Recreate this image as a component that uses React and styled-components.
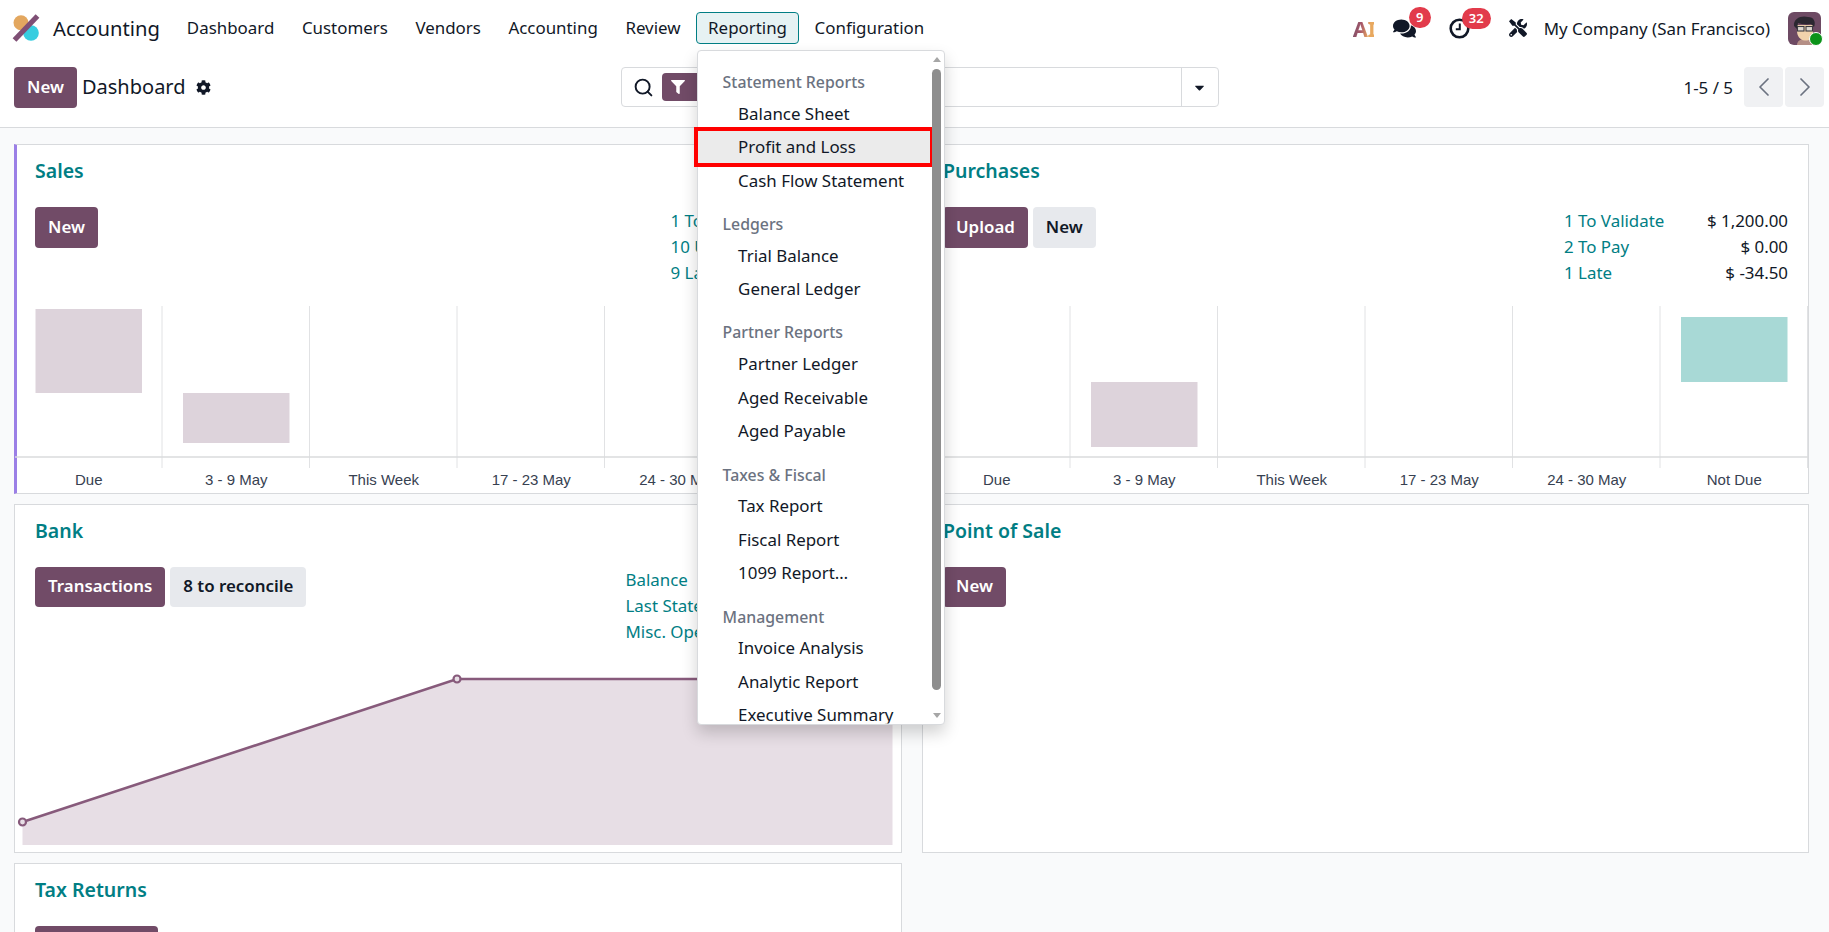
import React from "react";
import styled, { createGlobalStyle } from "styled-components";
import { FaCog, FaComments, FaFilter, FaCaretDown, FaTools } from "react-icons/fa";
import { ChevronLeft, ChevronRight, Search } from "lucide-react";

const Global = createGlobalStyle`
  html, body { margin: 0; padding: 0; height: 100%; overflow: hidden; background: #f9fafb; }
  body { font-family: "Noto Sans", "Open Sans", sans-serif; font-size: 16.9px; color: #111827; }
  * { box-sizing: border-box; }
`;

const Page = styled.div`height: 932px; overflow: hidden; display: flex; flex-direction: column;`;
const TopBar = styled.header`height: 56px; background: #fff; display: flex; align-items: center; padding-left: 12px; padding-right: 8px; flex: none; position: relative; z-index: 5;`;
const Brand = styled.div`display: flex; align-items: center; gap: 13px; font-size: 20.2px; margin-right: 15px;`;
const MainNav = styled.nav`display: flex; align-items: center; gap: 3.6px;`;
const NavWrap = styled.div`position: relative;`;
const NavItem = styled.div`
  height: 32px; display: flex; align-items: center; padding: 0 ${p => (p.$active ? "11px" : "12px")}; border-radius: 4px; margin-top: -1px;
  border: ${p => (p.$active ? "1px solid #017e84" : "0")};
  background: ${p => (p.$active ? "#e6f2f3" : "transparent")};
`;
const Tray = styled.div`margin-left: auto; display: flex; align-items: center;`;
const TrayItem = styled.div`position: relative; display: flex; align-items: center; margin-left: ${p => p.$ml}px;`;
const AiMark = styled.span`
  font-size: 22px; font-weight: 700; line-height: 1; letter-spacing: -0.5px; width: 21px;
  background: linear-gradient(100deg, #714b67 0%, #a8596a 40%, #e8a85f 75%);
  -webkit-background-clip: text; background-clip: text; color: transparent;
`;
const Badge = styled.span`
  position: absolute; top: -10px; left: ${p => p.$left}px; height: 21px; min-width: 22px; padding: 0 7px; border-radius: 11px;
  background: #e23b4b; color: #fff; font-size: 13px; font-weight: 600; display: flex; align-items: center; justify-content: center;
`;
const Avatar = styled.div`position: relative; width: 33px; height: 33px; margin-left: 18px;`;
const Presence = styled.span`position: absolute; right: -2px; bottom: -1px; width: 14px; height: 14px; border-radius: 50%; background: #0b9319; border: 1px solid #fff;`;

const ControlPanel = styled.div`
  height: 72px; flex: none; background: #fff; border-bottom: 1px solid #d8dadd; padding: 11px 5px 0 14px;
  display: grid; grid-template-columns: 606.5px 598px 1fr; align-items: start;
`;
const Breadcrumb = styled.div`display: flex; align-items: center; height: 40px;`;
const PageTitle = styled.span`font-size: 20px; margin-left: 5px; margin-right: 10px; padding-bottom: 2px;`;
const Button = styled.button`
  font: inherit; font-weight: 600; height: ${p => (p.$tall ? "41px" : "40px")}; padding: 0 ${p => p.$pad || 13}px 2px; border: 0; border-radius: 4px; flex: none;
  min-width: ${p => p.$minw || 0}px;
  background: ${p => (p.$secondary ? "#e7e9ed" : "#714b67")};
  color: ${p => (p.$secondary ? "#111827" : "#fff")};
`;
const SearchBox = styled.div`height: 40px; display: flex; align-items: stretch; border: 1px solid #d8dadd; border-radius: 4px; background: #fff;`;
const SearchField = styled.div`flex: 1; display: flex; align-items: center; padding-left: 11px; gap: 8px;`;
const Facet = styled.div`width: 60px; height: 28px; background: #714b67; border-radius: 4px; display: flex; align-items: center; padding-left: 9px; color: #fff;`;
const SearchToggle = styled.div`width: 37px; border-left: 1px solid #d8dadd; display: flex; align-items: center; justify-content: center;`;
const PagerArea = styled.div`display: flex; justify-content: flex-end; align-items: center; height: 40px;`;
const PagerText = styled.span`margin-right: 11px;`;
const PagerButton = styled.div`width: 39px; height: 40px; border-radius: 4px; background: #f0f1f3; color: #6b7280; display: flex; align-items: center; justify-content: center; margin-left: ${p => p.$ml || 0}px;`;

const Board = styled.main`
  flex: 1; min-height: 0; overflow: hidden; padding: 16px 20px 0 14px;
  display: grid; grid-template-columns: 887.5px 887px; column-gap: 20.5px; grid-auto-rows: 349.5px; row-gap: 10px;
`;
const Card = styled.section`
  background: #fff; border: 1px solid #d8dadd; display: flex; flex-direction: column; position: relative;
  border-left: ${p => (p.$accent ? "3px solid #9b7fe6" : "1px solid #d8dadd")};
`;
const CardBody = styled.div`padding: 13px 20px 0 ${p => (p.$accent ? 18 : 20)}px;`;
const CardTitle = styled.h2`margin: 0; font-size: 19.5px; line-height: 26px; font-weight: 600; color: #017e84;`;
const CardRow = styled.div`margin-top: 23px; display: flex; justify-content: space-between; align-items: flex-start;`;
const Actions = styled.div`display: flex; gap: 5px;`;
const Stats = styled.div`width: ${p => p.$w}px; display: grid; grid-template-columns: 1fr auto; grid-auto-rows: 26px; align-items: center;`;
const StatLabel = styled.span`color: #017e84;`;
const StatValue = styled.span`text-align: right;`;
const ChartSvg = styled.svg`display: block; margin-top: auto; margin-left: ${p => (p.$accent ? -2 : 0)}px; margin-bottom: ${p => p.$mb || 0}px; flex: none;`;
const AxisLabel = styled.text`font-family: "Liberation Sans", Arial, sans-serif; font-size: 15px; fill: #374151; text-anchor: middle;`;

const Dropdown = styled.div`
  position: absolute; top: 37px; left: 1px; width: 248px; height: 675px; background: #fff; border: 1px solid #d8dadd; border-radius: 4px;
  box-shadow: 0 8px 16px rgba(0,0,0,.18); display: flex; flex-direction: column; z-index: 10;
`;
const MenuList = styled.div`
  flex: 1; min-height: 0; padding: 18.5px 14px 0 0; clip-path: inset(-20px -20px 0 -20px);
`;
const MenuHeader = styled.div`height: 27.5px; line-height: 27px; padding-left: 24.5px; font-size: 15.85px; font-weight: 500; color: #6b7280; margin-top: ${p => (p.$first ? 0 : 13.5)}px;`;
const MenuItem = styled.div`
  position: relative; height: 33.7px; line-height: 33.7px; padding-left: 40px; white-space: nowrap;
  background: ${p => (p.$hl ? "#ebebeb" : "transparent")};
  ${p => p.$hl && `&::after { content: ""; position: absolute; inset: -3.3px -3.5px -3.3px -4px; border: 4px solid #f00; }`}
`;
const ScrollThumb = styled.div`position: absolute; top: 18px; right: 3px; width: 9px; height: 621px; border-radius: 4.5px; background: #8e8e8e;`;
const ScrollArrow = styled.div`
  position: absolute; right: 3.5px; ${p => (p.$up ? "top: 6px;" : "bottom: 6px;")} width: 0; height: 0;
  border-left: 4px solid transparent; border-right: 4px solid transparent;
  ${p => (p.$up ? "border-bottom: 5px solid #a6a6a6;" : "border-top: 5px solid #a6a6a6;")}
`;

const COL = 147.5;
const LABELS = ["Due", "3 - 9 May", "This Week", "17 - 23 May", "24 - 30 May", "Not Due"];

function BarChart({ bars, accent }) {
  return (
    <ChartSvg $accent={accent} $mb={1} width="885" height="186" viewBox="0 0 885 186">
      {[1, 2, 3, 4, 5, 6].map(i => (
        <line key={i} x1={COL * i - 0.5} x2={COL * i - 0.5} y1="0" y2="162" stroke="#e1e2e4" strokeWidth="1" />
      ))}
      <line x1="0" x2="885" y1="151" y2="151" stroke="#dadbdd" strokeWidth="1.5" />
      {bars.map(b => (
        <rect key={b.col} x={COL * b.col + 20.5} y={b.top} width="106.5" height={b.bottom - b.top} fill={b.color} />
      ))}
      {LABELS.map((l, i) => (
        <AxisLabel key={l} x={COL * i + COL / 2} y="179">{l}</AxisLabel>
      ))}
    </ChartSvg>
  );
}

function LineChart() {
  return (
    <ChartSvg width="885" height="183" viewBox="0 0 885 183">
      <path d="M7.5 153 L442 10 L877.5 10 L877.5 176 L7.5 176 Z" fill="#e7dee5" />
      <path d="M7.5 153 L442 10 L877.5 10" fill="none" stroke="#875a7b" strokeWidth="2.6" />
      <circle cx="7.5" cy="153" r="3.5" fill="#e7dee5" stroke="#875a7b" strokeWidth="2.2" />
      <circle cx="442" cy="10" r="3.5" fill="#e7dee5" stroke="#875a7b" strokeWidth="2.2" />
    </ChartSvg>
  );
}

function Logo() {
  return (
    <svg width="28" height="28" viewBox="0 0 28 28">
      <circle cx="9" cy="8.7" r="7.5" fill="#e3a75f" />
      <circle cx="19" cy="19" r="7.8" fill="#37cde0" />
      <path d="M2.5 26 L25.5 2" stroke="#7f4f75" strokeWidth="5.2" />
    </svg>
  );
}

function ClockIcon() {
  return (
    <svg width="21" height="21" viewBox="0 0 21 21" fill="none" stroke="#111827">
      <circle cx="10.5" cy="10.5" r="8.8" strokeWidth="2.6" />
      <path d="M10.8 5.5 V11.2 H6.8" strokeWidth="2" />
    </svg>
  );
}

function AvatarArt() {
  return (
    <svg width="33" height="33" viewBox="0 0 33 33">
      <rect width="33" height="33" rx="6" fill="#6d4a63" />
      <path d="M9 33 C9 25 24 25 26 33 Z" fill="#b58f86" />
      <path d="M9 13 H25 V22 C25 27 20 29 16.5 28.5 C12 28 9 24 9 19 Z" fill="#f1d3ac" />
      <path d="M6 14 C5 6 14 3 20 5 C26 5 28 10 26 15 L23 12 C18 13 13 12 10 11 L9 17 Z" fill="#2b2730" />
      <rect x="9.5" y="14.5" width="6.5" height="4.5" fill="#ded8cf" stroke="#3a3a40" strokeWidth="1.1" />
      <rect x="18" y="14.5" width="6.5" height="4.5" fill="#ded8cf" stroke="#3a3a40" strokeWidth="1.1" />
    </svg>
  );
}

const MENU = [
  ["Statement Reports", ["Balance Sheet", "Profit and Loss", "Cash Flow Statement"]],
  ["Ledgers", ["Trial Balance", "General Ledger"]],
  ["Partner Reports", ["Partner Ledger", "Aged Receivable", "Aged Payable"]],
  ["Taxes & Fiscal", ["Tax Report", "Fiscal Report", "1099 Report…"]],
  ["Management", ["Invoice Analysis", "Analytic Report", "Executive Summary"]],
];

function ReportingMenu() {
  return (
    <Dropdown>
      <MenuList>
        {MENU.map(([head, items], i) => (
          <React.Fragment key={head}>
            <MenuHeader $first={i === 0}>{head}</MenuHeader>
            {items.map(it => <MenuItem key={it} $hl={it === "Profit and Loss"}>{it}</MenuItem>)}
          </React.Fragment>
        ))}
      </MenuList>
      <ScrollArrow $up />
      <ScrollThumb />
      <ScrollArrow />
    </Dropdown>
  );
}

function StatTable({ rows, w }) {
  return (
    <Stats $w={w}>
      {rows.map(([l, v]) => (
        <React.Fragment key={l}>
          <StatLabel>{l}</StatLabel>
          <StatValue>{v}</StatValue>
        </React.Fragment>
      ))}
    </Stats>
  );
}

const BAR = "#ddd3db";

export default function App() {
  return (
    <Page>
      <Global />
      <TopBar>
        <Brand><Logo />Accounting</Brand>
        <MainNav>
          {["Dashboard", "Customers", "Vendors", "Accounting", "Review"].map(n => <NavItem key={n}>{n}</NavItem>)}
          <NavWrap>
            <NavItem $active>Reporting</NavItem>
            <ReportingMenu />
          </NavWrap>
          <NavItem>Configuration</NavItem>
        </MainNav>
        <Tray>
          <TrayItem $ml={0}><AiMark>AI</AiMark></TrayItem>
          <TrayItem $ml={19}><FaComments size={23} color="#111827" /><Badge $left={16}>9</Badge></TrayItem>
          <TrayItem $ml={33}><ClockIcon /><Badge $left={13}>32</Badge></TrayItem>
          <TrayItem $ml={39}><FaTools size={18} color="#111827" /></TrayItem>
          <TrayItem $ml={17}>My Company (San Francisco)</TrayItem>
          <Avatar><AvatarArt /><Presence /></Avatar>
        </Tray>
      </TopBar>

      <ControlPanel>
        <Breadcrumb>
          <Button $pad={13} $tall>New</Button>
          <PageTitle>Dashboard</PageTitle>
          <FaCog size={15} />
        </Breadcrumb>
        <SearchBox>
          <SearchField>
            <Search size={21} strokeWidth={2.2} color="#111827" />
            <Facet><FaFilter size={14} /></Facet>
          </SearchField>
          <SearchToggle><FaCaretDown size={15} /></SearchToggle>
        </SearchBox>
        <PagerArea>
          <PagerText>1-5 / 5</PagerText>
          <PagerButton><ChevronLeft size={32} strokeWidth={1.3} /></PagerButton>
          <PagerButton $ml={2}><ChevronRight size={32} strokeWidth={1.3} /></PagerButton>
        </PagerArea>
      </ControlPanel>

      <Board>
        <Card $accent>
          <CardBody $accent>
            <CardTitle>Sales</CardTitle>
            <CardRow>
              <Actions><Button $tall>New</Button></Actions>
              <StatTable w={210} rows={[["1 To Validate", ""], ["10 Unpaid", ""], ["9 Late", ""]]} />
            </CardRow>
          </CardBody>
          <BarChart accent bars={[{ col: 0, top: 3, bottom: 87, color: BAR }, { col: 1, top: 87, bottom: 137, color: BAR }]} />
        </Card>

        <Card>
          <CardBody>
            <CardTitle>Purchases</CardTitle>
            <CardRow>
              <Actions>
                <Button $tall>Upload</Button>
                <Button $tall $secondary>New</Button>
              </Actions>
              <StatTable w={224} rows={[["1 To Validate", "$ 1,200.00"], ["2 To Pay", "$ 0.00"], ["1 Late", "$ -34.50"]]} />
            </CardRow>
          </CardBody>
          <BarChart bars={[{ col: 1, top: 76, bottom: 141, color: BAR }, { col: 5, top: 11, bottom: 76, color: "#a8d9d6" }]} />
        </Card>

        <Card>
          <CardBody>
            <CardTitle>Bank</CardTitle>
            <CardRow>
              <Actions>
                <Button>Transactions</Button>
                <Button $secondary>8 to reconcile</Button>
              </Actions>
              <StatTable w={255} rows={[["Balance", ""], ["Last Statement", ""], ["Misc. Operations", ""]]} />
            </CardRow>
          </CardBody>
          <LineChart />
        </Card>

        <Card>
          <CardBody>
            <CardTitle>Point of Sale</CardTitle>
            <CardRow>
              <Actions><Button>New</Button></Actions>
            </CardRow>
          </CardBody>
        </Card>

        <Card>
          <CardBody>
            <CardTitle>Tax Returns</CardTitle>
            <CardRow>
              <Actions><Button $minw={123} aria-label="Tax Returns" /></Actions>
            </CardRow>
          </CardBody>
        </Card>
      </Board>
    </Page>
  );
}
